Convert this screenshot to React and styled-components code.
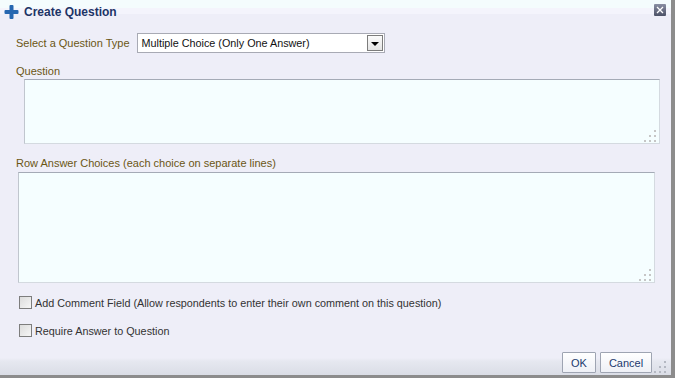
import React, { useState } from "react";
import styled, { createGlobalStyle } from "styled-components";

const GlobalStyle = createGlobalStyle`
  html, body {
    margin: 0;
    padding: 0;
    background: #eeeef8;
  }
  body {
    font-family: "Liberation Sans", Arial, sans-serif;
    font-size: 11px;
  }
`;

function PlusIcon() {
  return (
    <svg width="15" height="14" viewBox="0 0 15 14">
      <rect x="5.5" y="0" width="4" height="14" rx="1" fill="#2566b0" />
      <rect x="0.5" y="5" width="14" height="4" rx="1" fill="#2566b0" />
    </svg>
  );
}

function CloseIcon() {
  return (
    <svg width="12" height="12" viewBox="0 0 12 12">
      <path d="M3 3 L9 9 M9 3 L3 9" stroke="#fff" strokeWidth="1.3" />
    </svg>
  );
}

function Grip({ light }) {
  const dots = [
    [10, 0],
    [5, 5],
    [10, 5],
    [0, 10],
    [5, 10],
    [10, 10],
  ];
  return (
    <svg width="12" height="12" viewBox="0 0 12 12">
      {dots.map(([x, y], i) => (
        <rect key={i} x={x} y={y} width="2" height="2" fill={light ? "#b4b8c2" : "#c6c6c6"} />
      ))}
    </svg>
  );
}

function Dialog() {
  const [type, setType] = useState("Multiple Choice (Only One Answer)");
  const [comment, setComment] = useState(false);
  const [require, setRequire] = useState(false);

  return (
    <Frame>
      <Header>
        <Title>
          <PlusIcon />
          <span>Create Question</span>
        </Title>
        <CloseButton type="button">
          <CloseIcon />
        </CloseButton>
      </Header>

      <Body>
        <TypeRow>
          <Label>Select a Question Type</Label>
          <Select>
            <span>{type}</span>
            <DropButton onClick={() => setType(type)}>
              <Arrow />
            </DropButton>
          </Select>
        </TypeRow>

        <Label>Question</Label>
        <AreaBox $indent={8} $height={63} $mt={2}>
          <GripSpot>
            <Grip />
          </GripSpot>
        </AreaBox>

        <Label $mt={13}>Row Answer Choices (each choice on separate lines)</Label>
        <AreaBox $indent={2} $height={109} $mt={3} $right={5}>
          <GripSpot>
            <Grip />
          </GripSpot>
        </AreaBox>

        <CheckRow $mt={13} onClick={() => setComment(!comment)}>
          <Box $checked={comment} />
          <CheckText>
            Add Comment Field (Allow respondents to enter their own comment on this question)
          </CheckText>
        </CheckRow>
        <CheckRow $mt={15} onClick={() => setRequire(!require)}>
          <Box $checked={require} />
          <CheckText>Require Answer to Question</CheckText>
        </CheckRow>
      </Body>

      <Footer>
        <Button type="button">OK</Button>
        <Button type="button" $wide>
          Cancel
        </Button>
        <FooterGrip>
          <Grip light />
        </FooterGrip>
      </Footer>
    </Frame>
  );
}

export default function App() {
  return (
    <>
      <GlobalStyle />
      <Dialog />
    </>
  );
}

const Frame = styled.div`
  position: relative;
  width: 671px;
  height: 375px;
  display: flex;
  flex-direction: column;
  background: #eeeef8;
  border-right: 4px solid #8c8c8c;
  border-bottom: 3px solid #8c8c8c;
`;

const Header = styled.div`
  height: 22px;
  display: flex;
  align-items: flex-start;
  justify-content: space-between;
  background: linear-gradient(#f4fcfd 0, #f4fcfd 8px, #f4f4fc 8px, #f4f4fc 14px, #eeeef8 14px);
`;

const Title = styled.div`
  display: flex;
  align-items: center;
  gap: 5px;
  padding: 5px 0 0 4px;
  font-family: "Liberation Sans", Arial, sans-serif;
  font-weight: bold;
  font-size: 12px;
  color: #1d3466;
`;

const CloseButton = styled.button`
  width: 12px;
  height: 12px;
  margin: 4px 5px 0 0;
  padding: 0;
  border: none;
  border-radius: 1px;
  display: flex;
  align-items: center;
  justify-content: center;
  background: linear-gradient(#8a8fa3, #4c5166);
`;

const Body = styled.div`
  flex: 1;
  display: flex;
  flex-direction: column;
  align-items: flex-start;
  padding: 11px 0 0 16px;
`;

const TypeRow = styled.div`
  display: flex;
  align-items: center;
  gap: 7px;
  margin-bottom: 12px;
`;

const Label = styled.div`
  color: #6b5614;
  font-size: 11px;
  margin-top: ${(p) => p.$mt || 0}px;
`;

const Select = styled.div`
  width: 242px;
  height: 18px;
  display: flex;
  align-items: center;
  justify-content: space-between;
  background: #fff;
  border: 1px solid #a8aab4;
  color: #111;
  font-size: 10.8px;
  padding-left: 4px;
  box-sizing: content-box;
`;

const DropButton = styled.div`
  width: 16px;
  height: 16px;
  margin-right: 1px;
  display: flex;
  align-items: center;
  justify-content: center;
  background: linear-gradient(#fbfbfb, #e4e4e4);
  border: 1px solid #7c7c7c;
  box-sizing: border-box;
`;

const Arrow = styled.span`
  width: 0;
  height: 0;
  border-left: 4px solid transparent;
  border-right: 4px solid transparent;
  border-top: 4px solid #000;
  margin-top: 1px;
`;

const AreaBox = styled.div`
  position: relative;
  align-self: stretch;
  margin: ${(p) => p.$mt}px ${(p) => (p.$right || 0) + 11}px 0 ${(p) => p.$indent}px;
  height: ${(p) => p.$height}px;
  background: #f5feff;
  border: 1px solid #d4dae0;
  border-top-color: #a4aab6;
  border-left-color: #c0c6ce;
`;

const GripSpot = styled.div`
  position: absolute;
  right: 3px;
  bottom: 1px;
  line-height: 0;
`;

const CheckRow = styled.label`
  display: flex;
  align-items: center;
  gap: 3px;
  margin: ${(p) => p.$mt}px 0 0 3px;
  cursor: pointer;
`;

const Box = styled.span`
  width: 11px;
  height: 11px;
  border: 1px solid #7d7d7d;
  background: ${(p) => (p.$checked ? "#cfe3f7" : "linear-gradient(135deg, #dcdcdc, #f6f6f6)")};
`;

const CheckText = styled.span`
  color: #333;
  font-size: 10.8px;
`;

const Footer = styled.div`
  position: relative;
  height: 23px;
  display: flex;
  justify-content: flex-end;
  align-items: flex-start;
  gap: 4px;
  padding: 5px 19px 0 0;
  background: linear-gradient(#eeeef8 0, #eeeef8 11px, #e6e8f0 14px, #dadde6 28px);
`;

const Button = styled.button`
  height: 21px;
  width: ${(p) => (p.$wide ? 52 : 34)}px;
  padding: 0;
  font-family: "Liberation Sans", Arial, sans-serif;
  font-size: 11px;
  color: #1c3a6e;
  background: linear-gradient(#ffffff, #eef0f6);
  border: 1px solid #9ea4b2;
  border-radius: 1px;
`;

const FooterGrip = styled.div`
  position: absolute;
  right: 5px;
  bottom: 2px;
  line-height: 0;
`;
